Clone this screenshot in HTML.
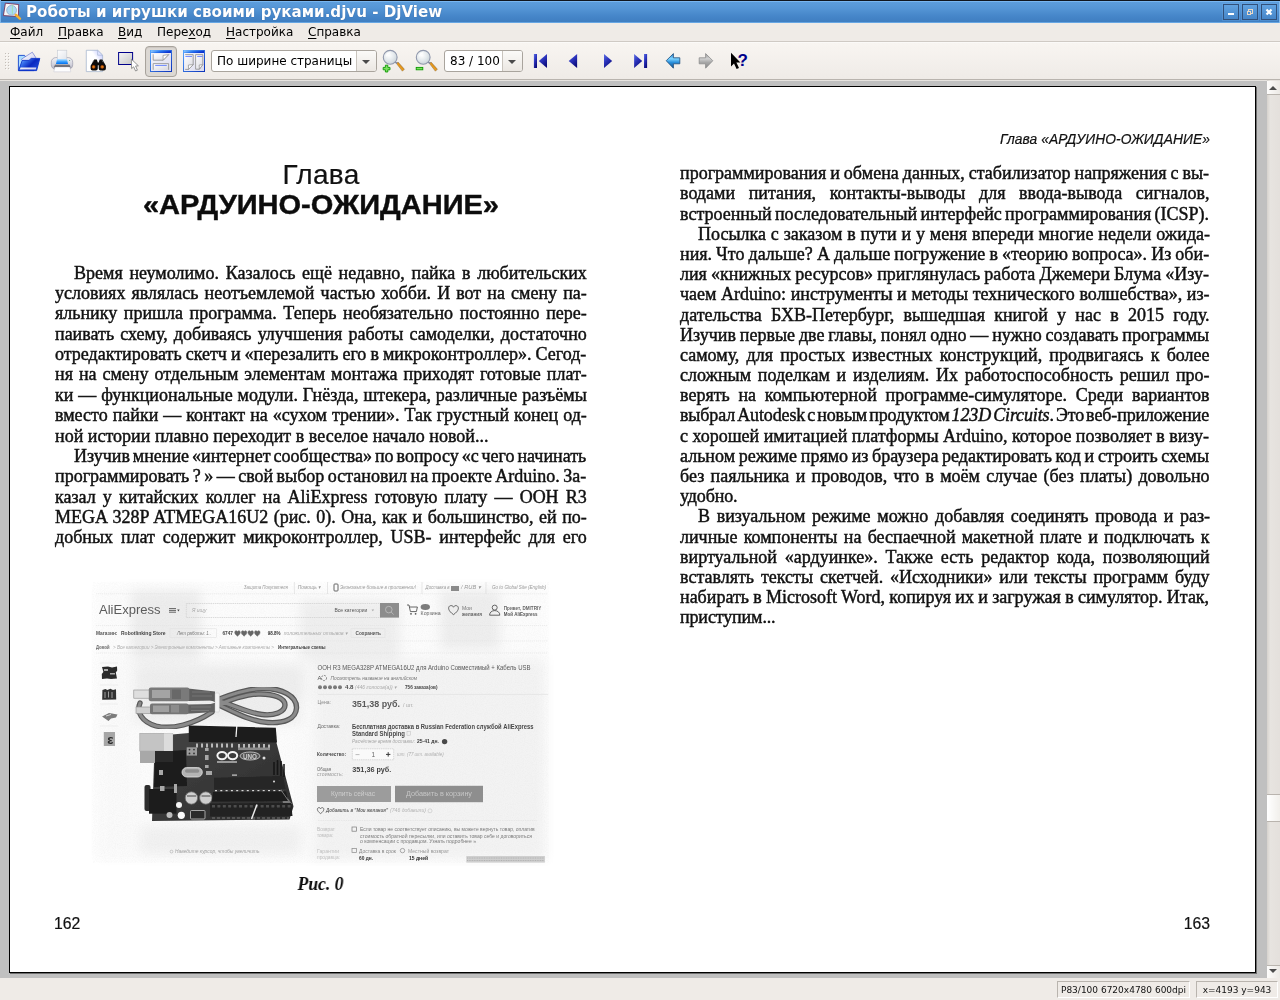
<!DOCTYPE html>
<html lang="ru">
<head>
<meta charset="utf-8">
<title>Роботы и игрушки своими руками.djvu - DjView</title>
<style>
*{box-sizing:border-box;margin:0;padding:0}
html,body{width:1280px;height:1000px;overflow:hidden;background:#efebe7;font-family:"DejaVu Sans","Liberation Sans",sans-serif;font-size:13px;color:#000}
.abs{position:absolute}
#title,#menubar span,.combo span,.sbox,.ln,.bt{will-change:transform}
#titlebar{position:absolute;left:0;top:0;width:1280px;height:23px;background:linear-gradient(#10161e 0,#10161e 1px,#78b6f0 1px,#78b6f0 2px,#5c9ddc 2px,#5596d6 8px,#4686c9 16px,#3f7ec1 22px,#66a6e3 22px,#66a6e3 23px);border-left:1px solid #7ab3ea}
#title{position:absolute;left:26px;top:2px;height:22px;line-height:21px;font-weight:bold;font-size:15.1px;color:#fff;white-space:nowrap;text-shadow:0 0 1px rgba(30,60,110,.6)}
.wbtn{position:absolute;top:4px;width:16px;height:16px;border:1px solid #31507a;background:linear-gradient(#62a3e1,#4585c8);box-shadow:0 0 0 1px rgba(120,180,240,.25)}
#menubar{position:absolute;left:0;top:23px;width:1280px;height:18px;background:#efebe7}
#menubar span{position:absolute;top:0;line-height:18px;font-size:12px;white-space:nowrap}
#menubar u{text-decoration:underline;text-underline-offset:2px}
#tsep{position:absolute;left:0;top:41px;width:1280px;height:1px;background:#cfcac4}
#toolbar{position:absolute;left:0;top:42px;width:1280px;height:38px;background:linear-gradient(#f8f5f1,#efebe7);border-top:1px solid #fbfaf8;border-bottom:1px solid #b9b4ae}
.combo{position:absolute;top:50px;height:22px;border:1px solid #a9a49d;border-radius:3px;background:#fff;font-size:12px;line-height:20px;white-space:nowrap}
.combo .arrow{position:absolute;right:0;top:0;width:20px;height:20px;border-left:1px solid #c9c4bd;background:linear-gradient(#fbfaf8,#ebe7e2);border-radius:0 2px 2px 0}
.combo .arrow:after{content:"";position:absolute;left:5px;top:9px;border:4px solid transparent;border-top:4px solid #4a4a4a;border-bottom:none}
#viewport{position:absolute;left:0;top:80px;width:1267px;height:898px;background:#c0c0c0}
#page{position:absolute;left:9px;top:86px;width:1247px;height:887px;background:#fff;border:1px solid #000;box-shadow:1px 1px 0 #6e6e6e}
#vscroll{position:absolute;left:1267px;top:80px;width:13px;height:898px;background:linear-gradient(90deg,#d6d2cd 0,#e7e4e0 25%,#e4e0dc 100%)}
#status{position:absolute;left:0;top:978px;width:1280px;height:22px;background:#efebe7}
.sbox{position:absolute;top:981px;height:17px;border:1px solid #b9b4ae;border-bottom-color:#fff;border-right-color:#fff;font-size:9px;line-height:15px;padding-top:1px;white-space:nowrap;text-align:center;color:#111}
.ln{position:absolute;white-space:pre;font-family:"Liberation Serif",serif;font-size:18px;line-height:20px;height:20px;color:#111;text-align:justify;text-align-last:justify;-webkit-text-stroke:0.45px #111}
.ln.nj{text-align:left;text-align-last:left}
</style>
</head>
<body>
<div id="titlebar"></div>
<div class="abs" style="left:1279px;top:1px;width:1px;height:22px;background:#86bdf0"></div>
<div id="title">Роботы и игрушки своими руками.djvu - DjView</div>
<!--ICON_APP-->
<div class="wbtn" style="left:1223px"><div class="abs" style="left:4px;top:7.600px;width:6px;height:2.800px;background:#fff"></div></div>
<div class="wbtn" style="left:1242px"><svg class="abs" style="left:0;top:0" width="14" height="14" viewBox="0 0 14 14"><rect x="5.500" y="4.500" width="4" height="4" fill="none" stroke="#ead9c5" stroke-width="1"/><rect x="4.500" y="6.500" width="3" height="3" fill="#4b8bce" stroke="#ead9c5" stroke-width="1"/></svg></div>
<div class="wbtn" style="left:1261px"><svg class="abs" style="left:0;top:0" width="14" height="14" viewBox="0 0 14 14"><path d="M4.5 4.5L9.5 9.5M9.5 4.5L4.5 9.5" stroke="#fff" stroke-width="2.2"/></svg></div>

<div id="menubar">
<span style="left:10px"><u>Ф</u>айл</span>
<span style="left:58px"><u>П</u>равка</span>
<span style="left:118px"><u>В</u>ид</span>
<span style="left:157px">Пере<u>х</u>од</span>
<span style="left:226px"><u>Н</u>астройка</span>
<span style="left:308px"><u>С</u>правка</span>
</div>
<div id="tsep"></div>
<div id="toolbar"></div>
<!--TOOLBAR_ICONS-->
<div class="combo" style="left:211px;width:166px"><span style="position:absolute;left:5px;top:0">По ширине страницы</span><div class="arrow"></div></div>
<div class="combo" style="left:444px;width:79px"><span style="position:absolute;left:5px;top:0">83 / 100</span><div class="arrow"></div></div>

<div id="viewport"></div>
<div class="abs" style="left:0;top:80px;width:1280px;height:1px;background:#e6e3df"></div>
<div id="page"></div>
<div id="vscroll">
<div class="abs" style="left:0;top:1px;width:13px;height:14px;background:linear-gradient(90deg,#fdfcfb,#ece9e5);border-bottom:1px solid #bab5af"></div>
<div class="abs" style="left:2px;top:6px;border:4px solid transparent;border-bottom:4px solid #4c4c4c;border-top:none"></div>
<div class="abs" style="left:0;top:714px;width:13px;height:28px;background:linear-gradient(90deg,#ffffff,#f1efeb);border-top:1px solid #b9b4ae;border-bottom:1px solid #b9b4ae"></div>
<div class="abs" style="left:0;top:885px;width:13px;height:13px;background:linear-gradient(90deg,#fdfcfb,#ece9e5);border-top:1px solid #bab5af"></div>
<div class="abs" style="left:2px;top:889px;border:4px solid transparent;border-top:4px solid #4c4c4c;border-bottom:none"></div>
</div>
<div id="status"></div>
<div class="sbox" style="left:1057px;width:133px">P83/100 6720x4780 600dpi</div>
<div class="sbox" style="left:1196px;width:82px">x=4193 y=943</div>

<div class="ln" style="left:74.0px;top:262px;width:512.8px;transform:translateY(0.55px);">Время неумолимо. Казалось ещё недавно, пайка в любительских</div>
<div class="ln" style="left:55.0px;top:282px;width:531.8px;transform:translateY(0.92px);">условиях являлась неотъемлемой частью хобби. И вот на смену па-</div>
<div class="ln" style="left:55.0px;top:303px;width:531.8px;transform:translateY(0.29px);">яльнику пришла программа. Теперь необязательно постоянно пере-</div>
<div class="ln" style="left:55.0px;top:323px;width:531.8px;transform:translateY(0.66px);">паивать схему, добиваясь улучшения работы самоделки, достаточно</div>
<div class="ln" style="left:55.0px;top:344px;width:531.8px;transform:translateY(0.03px);word-spacing:-0.45px;text-align-last:left;">отредактировать скетч и «перезалить его в микроконтроллер». Сегод-</div>
<div class="ln" style="left:55.0px;top:364px;width:531.8px;transform:translateY(0.40px);">ня на смену отдельным элементам монтажа приходят готовые плат-</div>
<div class="ln" style="left:55.0px;top:384px;width:531.8px;transform:translateY(0.77px);">ки — функциональные модули. Гнёзда, штекера, различные разъёмы</div>
<div class="ln" style="left:55.0px;top:405px;width:531.8px;transform:translateY(0.14px);">вместо пайки — контакт на «сухом трении». Так грустный конец од-</div>
<div class="ln" style="left:55.0px;top:425px;width:433.5px;transform:translateY(0.51px);">ной истории плавно переходит в веселое начало новой...</div>
<div class="ln" style="left:74.0px;top:445px;width:512.8px;transform:translateY(0.88px);word-spacing:-1.59px;text-align-last:left;">Изучив мнение «интернет сообщества» по вопросу «с чего начинать</div>
<div class="ln" style="left:55.0px;top:466px;width:531.8px;transform:translateY(0.25px);word-spacing:-1.03px;text-align-last:left;">программировать ? » — свой выбор остановил на проекте Arduino. За-</div>
<div class="ln" style="left:55.0px;top:486px;width:531.8px;transform:translateY(0.62px);">казал у китайских коллег на AliExpress готовую плату — OOH R3</div>
<div class="ln" style="left:55.0px;top:506px;width:531.8px;transform:translateY(0.99px);">MEGA 328P ATMEGA16U2 (рис. 0). Она, как и большинство, ей по-</div>
<div class="ln" style="left:55.0px;top:527px;width:531.8px;transform:translateY(0.36px);">добных плат содержит микроконтроллер, USB- интерфейс для его</div>
<div class="ln" style="left:680.0px;top:163px;width:529.6px;transform:translateY(0.20px);word-spacing:-0.51px;text-align-last:left;">программирования и обмена данных, стабилизатор напряжения с вы-</div>
<div class="ln" style="left:680.0px;top:183px;width:529.6px;transform:translateY(0.39px);">водами питания, контакты-выводы для ввода-вывода сигналов,</div>
<div class="ln" style="left:680.0px;top:203px;width:529.6px;transform:translateY(0.58px);word-spacing:-1.21px;text-align-last:left;">встроенный последовательный интерфейс программирования (ICSP).</div>
<div class="ln" style="left:697.5px;top:223px;width:512.1px;transform:translateY(0.77px);">Посылка с заказом в пути и у меня впереди многие недели ожида-</div>
<div class="ln" style="left:680.0px;top:243px;width:529.6px;transform:translateY(0.96px);word-spacing:-0.44px;text-align-last:left;">ния. Что дальше? А дальше погружение в «теорию вопроса». Из оби-</div>
<div class="ln" style="left:680.0px;top:264px;width:529.6px;transform:translateY(0.15px);word-spacing:-0.35px;text-align-last:left;">лия «книжных ресурсов» приглянулась работа Джемери Блума «Изу-</div>
<div class="ln" style="left:680.0px;top:284px;width:529.6px;transform:translateY(0.34px);">чаем Arduino: инструменты и методы технического волшебства», из-</div>
<div class="ln" style="left:680.0px;top:304px;width:529.6px;transform:translateY(0.53px);">дательства БХВ-Петербург, вышедшая книгой у нас в 2015 году.</div>
<div class="ln" style="left:680.0px;top:324px;width:529.6px;transform:translateY(0.72px);word-spacing:-0.61px;text-align-last:left;">Изучив первые две главы, понял одно — нужно создавать программы</div>
<div class="ln" style="left:680.0px;top:344px;width:529.6px;transform:translateY(0.91px);">самому, для простых известных конструкций, продвигаясь к более</div>
<div class="ln" style="left:680.0px;top:365px;width:529.6px;transform:translateY(0.10px);">сложным поделкам и изделиям. Их работоспособность решил про-</div>
<div class="ln" style="left:680.0px;top:385px;width:529.6px;transform:translateY(0.29px);">верять на компьютерной программе-симуляторе. Среди вариантов</div>
<div class="ln" style="left:680.0px;top:405px;width:529.6px;transform:translateY(0.48px);word-spacing:-2.30px;letter-spacing:-0.128px;text-align-last:left;">выбрал Autodesk с новым продуктом <i>123D Circuits</i>. Это веб-приложение</div>
<div class="ln" style="left:680.0px;top:425px;width:529.6px;transform:translateY(0.67px);word-spacing:-0.06px;text-align-last:left;">с хорошей имитацией платформы Arduino, которое позволяет в визу-</div>
<div class="ln" style="left:680.0px;top:445px;width:529.6px;transform:translateY(0.86px);word-spacing:-0.85px;text-align-last:left;">альном режиме прямо из браузера редактировать код и строить схемы</div>
<div class="ln" style="left:680.0px;top:466px;width:529.6px;transform:translateY(0.05px);">без паяльника и проводов, что в моём случае (без платы) довольно</div>
<div class="ln" style="left:680.0px;top:486px;width:58.0px;transform:translateY(0.24px);word-spacing:0.00px;letter-spacing:-0.118px;text-align-last:left;">удобно.</div>
<div class="ln" style="left:697.5px;top:506px;width:512.1px;transform:translateY(0.43px);">В визуальном режиме можно добавляя соединять провода и раз-</div>
<div class="ln" style="left:680.0px;top:526px;width:529.6px;transform:translateY(0.62px);">личные компоненты на беспаечной макетной плате и подключать к</div>
<div class="ln" style="left:680.0px;top:546px;width:529.6px;transform:translateY(0.81px);">виртуальной «ардуинке». Также есть редактор кода, позволяющий</div>
<div class="ln" style="left:680.0px;top:567px;width:529.6px;transform:translateY(0.00px);">вставлять тексты скетчей. «Исходники» или тексты программ буду</div>
<div class="ln" style="left:680.0px;top:587px;width:529.6px;transform:translateY(0.19px);word-spacing:-0.22px;text-align-last:left;">набирать в Microsoft Word, копируя их и загружая в симулятор. Итак,</div>
<div class="ln" style="left:680.0px;top:607px;width:96.0px;transform:translateY(0.38px);word-spacing:0.00px;letter-spacing:-0.129px;text-align-last:left;">приступим...</div>
<div class="abs bt" id="h1a" style="left:54px;top:158px;width:534px;text-align:center;font-family:'Liberation Sans',sans-serif;font-size:28px;line-height:34px;letter-spacing:0.3px;color:#111;white-space:nowrap;-webkit-text-stroke:0.2px #111">Глава</div>
<div class="abs bt" id="h1b" style="left:54px;top:188px;width:534px;text-align:center;font-family:'Liberation Sans',sans-serif;font-weight:bold;font-size:27px;line-height:34px;color:#0c0c0c;white-space:nowrap;transform:scaleX(1.075);-webkit-text-stroke:0.4px #0c0c0c">«АРДУИНО-ОЖИДАНИЕ»</div>
<div class="abs bt" id="hdr" style="left:900px;top:132px;width:310px;text-align:right;font-family:'Liberation Sans',sans-serif;font-style:italic;font-size:13.8px;line-height:16px;letter-spacing:0.09px;color:#111;white-space:nowrap;-webkit-text-stroke:0.2px #111">Глава «АРДУИНО-ОЖИДАНИЕ»</div>
<div class="abs bt" id="pn1" style="left:54px;top:914px;font-family:'Liberation Sans',sans-serif;font-size:15.8px;line-height:20px;color:#111;-webkit-text-stroke:0.2px #111">162</div>
<div class="abs bt" id="pn2" style="left:1110px;top:914px;width:100px;text-align:right;font-family:'Liberation Sans',sans-serif;font-size:15.8px;line-height:20px;color:#111;-webkit-text-stroke:0.2px #111">163</div>
<div class="abs bt" id="cap" style="left:220px;top:872px;width:201px;text-align:center;font-family:'Liberation Serif',serif;font-style:italic;font-weight:bold;font-size:19.5px;line-height:24px;color:#0c0c0c;transform:scaleX(0.9)">Рис. 0</div>

<!-- app icon -->
<svg class="abs" style="left:0;top:0" width="24" height="23" viewBox="0 0 24 23">
<path d="M5.4 3.2L18.7 4.5L18.4 16.6L3.4 15.6Z" fill="#f6f6f6" stroke="#7a3458" stroke-width="0.9"/>
<circle cx="11.6" cy="10.3" r="4.9" fill="#aad9f3" stroke="#8fa6cc" stroke-width="0.8"/>
<path d="M12.4 4.6V13.8" stroke="#9de0a8" stroke-width="0.9"/>
<path d="M15.8 14.8L19.9 18.6" stroke="#f3b033" stroke-width="2.6" stroke-linecap="round"/>
</svg>
<!-- toolbar handle -->
<svg class="abs" style="left:4px;top:52px" width="7" height="19" viewBox="0 0 7 19">
<g fill="#c3beb8"><rect x="1" y="1" width="1" height="1"/><rect x="4" y="1" width="1" height="1"/><rect x="1" y="4" width="1" height="1"/><rect x="4" y="4" width="1" height="1"/><rect x="1" y="7" width="1" height="1"/><rect x="4" y="7" width="1" height="1"/><rect x="1" y="10" width="1" height="1"/><rect x="4" y="10" width="1" height="1"/><rect x="1" y="13" width="1" height="1"/><rect x="4" y="13" width="1" height="1"/><rect x="1" y="16" width="1" height="1"/><rect x="4" y="16" width="1" height="1"/></g>
<g fill="#fbfaf8"><rect x="2" y="2" width="1" height="1"/><rect x="5" y="2" width="1" height="1"/><rect x="2" y="5" width="1" height="1"/><rect x="5" y="5" width="1" height="1"/><rect x="2" y="8" width="1" height="1"/><rect x="5" y="8" width="1" height="1"/><rect x="2" y="11" width="1" height="1"/><rect x="5" y="11" width="1" height="1"/><rect x="2" y="14" width="1" height="1"/><rect x="5" y="14" width="1" height="1"/><rect x="2" y="17" width="1" height="1"/><rect x="5" y="17" width="1" height="1"/></g>
</svg>
<!-- open folder -->
<svg class="abs" style="left:16px;top:50px" width="26" height="23" viewBox="16 50 26 23">
<defs>
<linearGradient id="fo1" x1="0" y1="0" x2="1" y2="1"><stop offset="0" stop-color="#9fd8ff"/><stop offset="1" stop-color="#e8f6ff"/></linearGradient>
<linearGradient id="fo2" x1="0" y1="0" x2="1" y2="0.6"><stop offset="0" stop-color="#e8f0ff"/><stop offset="0.3" stop-color="#3c78f0"/><stop offset="0.65" stop-color="#0a28c0"/><stop offset="1" stop-color="#1c46d6"/></linearGradient>
<linearGradient id="fo3" x1="0" y1="0" x2="1" y2="1"><stop offset="0" stop-color="#ffffff"/><stop offset="1" stop-color="#c4c4ea"/></linearGradient>
</defs>
<path d="M18.4 55.4H24.6L25.6 57H34V70.6H18.4Z" fill="url(#fo1)" stroke="#1243cc" stroke-width="0.9"/>
<path d="M21.4 59.2L32.3 52.2L36 57.8L27 66Z" fill="url(#fo3)" stroke="#5566cc" stroke-width="0.6"/>
<path d="M22.2 60.4H29L31.2 58.4H39.8L36.6 70.6H18.6Z" fill="url(#fo2)" stroke="#0a32c8" stroke-width="0.9"/>
<path d="M20.6 67.4H36.4L35.8 69.6H19.6Z" fill="url(#fo3)"/>
</svg>
<!-- printer -->
<svg class="abs" style="left:50px;top:49px" width="24" height="24" viewBox="50 49 24 24">
<defs>
<linearGradient id="pr1" x1="0" y1="0" x2="0" y2="1"><stop offset="0" stop-color="#f2f2f6"/><stop offset="0.6" stop-color="#d2d2dc"/><stop offset="1" stop-color="#a8a8b8"/></linearGradient>
<linearGradient id="pr2" x1="0" y1="0" x2="0" y2="1"><stop offset="0" stop-color="#bfe4ff"/><stop offset="0.5" stop-color="#3fa4ff"/><stop offset="1" stop-color="#0070ee"/></linearGradient>
<linearGradient id="pr3" x1="0" y1="0" x2="1" y2="1"><stop offset="0" stop-color="#ffffff"/><stop offset="1" stop-color="#dfe3ea"/></linearGradient>
<linearGradient id="pr4" x1="0" y1="0" x2="0" y2="1"><stop offset="0" stop-color="#8a8a94"/><stop offset="1" stop-color="#3c3c44"/></linearGradient>
</defs>
<rect x="51.3" y="57.6" width="21.4" height="11.8" rx="4.5" fill="url(#pr1)" stroke="#9c9cac" stroke-width="0.7"/>
<rect x="57.3" y="50.2" width="9.5" height="10" fill="url(#pr3)" stroke="#c4c8d0" stroke-width="0.6"/>
<path d="M57 59H67L68 64H56Z" fill="url(#pr2)"/>
<path d="M55 64.6H69.5L70.5 67.4H54Z" fill="url(#pr4)"/>
<path d="M55 67H69.8L70.8 71.8H53.8Z" fill="#fdfdfe" stroke="#c6c6d0" stroke-width="0.5"/>
<circle cx="69.6" cy="60.5" r="0.6" fill="#40b070"/>
</svg>
<!-- find -->
<svg class="abs" style="left:85px;top:49px" width="23" height="24" viewBox="85 49 23 24">
<defs>
<linearGradient id="fi1" x1="1" y1="0" x2="0.3" y2="0.6"><stop offset="0" stop-color="#b4bcff"/><stop offset="0.6" stop-color="#ffffff"/></linearGradient>
<radialGradient id="fi2"><stop offset="0" stop-color="#ff9a20"/><stop offset="0.6" stop-color="#b05008"/><stop offset="1" stop-color="#301000"/></radialGradient>
</defs>
<path d="M86.3 50.3H97.6L102.6 55.2V71.6H86.3Z" fill="url(#fi1)" stroke="#9fb0cc" stroke-width="0.7"/>
<path d="M97.6 50.3V55.2H102.6Z" fill="#dfe3ff" stroke="#9fb0cc" stroke-width="0.6"/>
<path d="M94.2 59.4h2.6l1 3h.9l1-3h2.6l3.6 6.4v2.6a2 2 0 0 1-2 2h-3.2a2 2 0 0 1-2-2v-3.2h-.9v3.2a2 2 0 0 1-2 2h-3.2a2 2 0 0 1-2-2v-2.6Z" fill="#0c0c0c"/>
<ellipse cx="93.6" cy="66.9" rx="2.2" ry="2.1" fill="url(#fi2)"/>
<ellipse cx="102.2" cy="66.9" rx="2.2" ry="2.1" fill="url(#fi2)"/>
<path d="M92.6 62.4l1.2-2M103.2 62.4l-1.2-2" stroke="#777" stroke-width="0.7"/>
</svg>
<!-- select -->
<svg class="abs" style="left:117px;top:51px" width="23" height="22" viewBox="117 51 23 22">
<defs><linearGradient id="se1" x1="0" y1="0" x2="1" y2="1"><stop offset="0" stop-color="#f6f6f6"/><stop offset="1" stop-color="#c6c6c6"/></linearGradient></defs>
<rect x="118.6" y="52.5" width="14" height="12" fill="url(#se1)" stroke="#00008b" stroke-width="1"/>
<path d="M131.4 59.2L131.6 68.6L133.6 66.8L135.6 71L137.4 70.2L135.6 66L138.4 65.8Z" fill="#fff" stroke="#7c7c7c" stroke-width="0.8"/>
</svg>
<!-- pressed btn -->
<div class="abs" style="left:145px;top:46px;width:32px;height:31px;border:1px solid #a8a39c;border-radius:4px;background:#dcd8d3;box-shadow:inset 0 1px 1px #cbc7c1"></div>
<!-- continuous -->
<svg class="abs" style="left:150px;top:50px" width="22" height="22" viewBox="0 0 22 22">
<defs>
<linearGradient id="wf" x1="0" y1="0" x2="1" y2="1"><stop offset="0" stop-color="#58a8ff"/><stop offset="1" stop-color="#0a30b8"/></linearGradient>
<linearGradient id="wt" x1="0" y1="0" x2="1" y2="0.4"><stop offset="0" stop-color="#a8dcff"/><stop offset="0.5" stop-color="#2a78f0"/><stop offset="1" stop-color="#0a32d0"/></linearGradient>
<linearGradient id="wi" x1="0" y1="0" x2="1" y2="1"><stop offset="0" stop-color="#f4f4fa"/><stop offset="1" stop-color="#dcdcee"/></linearGradient>
<linearGradient id="pg" x1="0" y1="0" x2="1" y2="1"><stop offset="0" stop-color="#ffffff"/><stop offset="1" stop-color="#d8d8e0"/></linearGradient>
</defs>
<rect x="0" y="0" width="22" height="22" fill="url(#wf)"/>
<rect x="1" y="0.6" width="20" height="2.4" fill="url(#wt)"/>
<rect x="1" y="3" width="20" height="18" fill="url(#wi)"/>
<path d="M3.2 4.3V10.2H13.2L18.8 4.5" fill="url(#pg)" stroke="#8c8c8c" stroke-width="0.8"/>
<path d="M18.6 4.6L13.2 10.2L13 5.4Z" fill="#fff" stroke="#8c8c8c" stroke-width="0.7"/>
<path d="M3.2 19.8V13.6H18.6V19.8" fill="url(#pg)" stroke="#8c8c8c" stroke-width="0.8"/>
<path d="M5.2 15.4H16.8" stroke="#6a86ff" stroke-width="1"/>
</svg>
<!-- side by side -->
<svg class="abs" style="left:183px;top:50px" width="22" height="22" viewBox="0 0 22 22">
<rect x="0" y="0" width="22" height="22" fill="url(#wf)"/>
<rect x="1" y="0.6" width="20" height="2.4" fill="url(#wt)"/>
<rect x="1" y="3" width="20" height="18" fill="url(#wi)"/>
<path d="M2.2 4.6H10.2V14.6L5.6 19.4H2.2" fill="url(#pg)" stroke="#8c8c8c" stroke-width="0.8"/>
<path d="M10.2 14.6L5.6 19.4L5.4 15Z" fill="#fff" stroke="#8c8c8c" stroke-width="0.7"/>
<path d="M2.4 6.4H9" stroke="#6a86ff" stroke-width="1"/>
<path d="M12.6 4.6H19.8V14.6L16.4 19.2H12.6Z" fill="url(#pg)" stroke="#8c8c8c" stroke-width="0.8"/>
<path d="M19.8 14.6L16.4 19.2L16.2 15Z" fill="#fff" stroke="#8c8c8c" stroke-width="0.7"/>
<path d="M14.2 6.4H19.6" stroke="#6a86ff" stroke-width="1"/>
</svg>
<!-- zoom in / zoom out -->
<svg class="abs" style="left:380px;top:48px" width="60" height="26" viewBox="380 48 60 26">
<defs>
<radialGradient id="zl" cx="0.4" cy="0.35" r="0.7"><stop offset="0" stop-color="#ffffff"/><stop offset="0.5" stop-color="#e6ebee"/><stop offset="1" stop-color="#c8d2d8"/></radialGradient>
<linearGradient id="zh" x1="0" y1="1" x2="1" y2="0"><stop offset="0" stop-color="#ffd060"/><stop offset="0.5" stop-color="#e89818"/><stop offset="1" stop-color="#a86008"/></linearGradient>
</defs>
<g id="mag">
<path d="M396.4 63.4L398 62L404.4 69.2L402.4 71.2Z" fill="url(#zh)" stroke="#8a6a40" stroke-width="0.5"/>
<path d="M394.6 61.8L397.2 63.4" stroke="#8088a0" stroke-width="1.6"/>
<circle cx="390.2" cy="57.3" r="6.9" fill="url(#zl)" stroke="#9098ac" stroke-width="1.1"/>
<path d="M386.6 56.4A4 4 0 0 1 390.2 52.8" fill="none" stroke="#fff" stroke-width="1.2" opacity="0.9"/>
</g>
<use href="#mag" x="33"/>
<path d="M385.4 65.2h2.4v2.2h2.2v2.4h-2.2v2.2h-2.4v-2.2h-2.2v-2.4h2.2Z" fill="#7ee060" stroke="#0c9a00" stroke-width="0.9"/>
<rect x="416.2" y="67.4" width="6.6" height="2.4" fill="#7ee060" stroke="#0c9a00" stroke-width="0.9"/>
</svg>
<!-- nav arrows -->
<svg class="abs" style="left:530px;top:52px" width="120" height="18" viewBox="530 52 120 18">
<defs><linearGradient id="nv" x1="0" y1="0" x2="0.6" y2="1"><stop offset="0" stop-color="#5c6ee4"/><stop offset="0.5" stop-color="#2c34bc"/><stop offset="1" stop-color="#0c0c7c"/></linearGradient></defs>
<rect x="533.9" y="54" width="3.1" height="14" fill="url(#nv)"/>
<path d="M538.8 61L547 54V68Z" fill="url(#nv)"/>
<path d="M568.7 61L577.1 54V68Z" fill="url(#nv)"/>
<path d="M612.2 61L604 54V68Z" fill="url(#nv)"/>
<path d="M642.2 61L634.1 54V68Z" fill="url(#nv)"/>
<rect x="644" y="54" width="3.1" height="14" fill="url(#nv)"/>
</svg>
<!-- back / forward -->
<svg class="abs" style="left:662px;top:51px" width="56" height="20" viewBox="662 51 56 20">
<defs>
<linearGradient id="bk" x1="0" y1="0" x2="0" y2="1"><stop offset="0" stop-color="#2a7cc8"/><stop offset="0.35" stop-color="#7fd4ff"/><stop offset="0.6" stop-color="#2a90dc"/><stop offset="1" stop-color="#14508c"/></linearGradient>
<linearGradient id="fw" x1="0" y1="0" x2="0" y2="1"><stop offset="0" stop-color="#9a9a9a"/><stop offset="0.35" stop-color="#d0d0d0"/><stop offset="0.6" stop-color="#a8a8a8"/><stop offset="1" stop-color="#8a8a8a"/></linearGradient>
</defs>
<path d="M666.2 60.7L673.4 53.6V57.8H679.8V63.8H673.4V68.2Z" fill="url(#bk)" stroke="#1c4c7c" stroke-width="0.8" stroke-linejoin="round"/>
<path d="M712.8 60.7L705.6 53.6V57.8H699.2V63.8H705.6V68.2Z" fill="url(#fw)" stroke="#8c8c8c" stroke-width="0.8" stroke-linejoin="round"/>
</svg>
<!-- whats this -->
<svg class="abs" style="left:728px;top:50px" width="24" height="22" viewBox="728 50 24 22">
<path d="M731 52.8V66.4L734 63.6L736.6 69L739 68L736.4 62.6L740.4 62.4Z" fill="#000"/>
<text x="737.6" y="65.8" font-family="Liberation Sans, sans-serif" font-weight="bold" font-size="17" fill="#00008b">?</text>
</svg>

<svg class="abs" id="fig" style="left:90px;top:578px" width="464" height="288" viewBox="90 578 464 288" font-family="Liberation Sans, sans-serif">
<defs>
<filter id="bl" x="-2%" y="-2%" width="104%" height="104%"><feGaussianBlur stdDeviation="0.55"/></filter>
<filter id="bl4" x="-3%" y="-3%" width="106%" height="106%"><feGaussianBlur stdDeviation="0.7"/></filter>
<filter id="bl2" x="-5%" y="-5%" width="110%" height="110%"><feGaussianBlur stdDeviation="0.8"/></filter>
<filter id="bl3" x="-10%" y="-10%" width="120%" height="120%"><feGaussianBlur stdDeviation="6"/></filter>
<filter id="noise" x="0" y="0" width="100%" height="100%">
<feTurbulence type="fractalNoise" baseFrequency="0.9" numOctaves="2" seed="7" result="n"/>
<feColorMatrix in="n" type="matrix" values="0 0 0 0 0.55  0 0 0 0 0.55  0 0 0 0 0.55  0.9 0.9 0 0 -0.72"/>
</filter>
<linearGradient id="brd" x1="0" y1="0" x2="1" y2="1"><stop offset="0" stop-color="#444444"/><stop offset="1" stop-color="#2c2c2c"/></linearGradient>
</defs>
<!-- background -->
<g filter="url(#bl3)">
<rect x="96" y="586" width="450" height="274" fill="#fcfcfc"/>
<rect x="131" y="590" width="70" height="70" fill="#ededed"/>
<rect x="300" y="600" width="100" height="60" fill="#efefef"/>
<rect x="440" y="590" width="60" height="60" fill="#eeeeee"/>
<rect x="312" y="660" width="234" height="200" fill="#f3f3f3"/>
<rect x="99" y="662" width="36" height="196" fill="#fafafa"/>
<rect x="135" y="664" width="170" height="60" fill="#eeeeee"/>
<rect x="300" y="700" width="16" height="150" fill="#fafafa"/>
<rect x="140" y="825" width="160" height="30" fill="#f1f1f1"/>
</g>
<rect x="92" y="582" width="457" height="281" filter="url(#noise)" opacity="0.16"/>

<!-- header part of screenshot -->
<g filter="url(#bl)">
<g stroke="#e0e0e0" stroke-width="0.6" stroke-dasharray="1.2 0.8">
<path d="M96 593.8H548"/><path d="M96 625.6H548"/><path d="M96 653H548"/><path d="M300 641H548" stroke="#e2e2e2"/>
</g>
<g stroke="#d8d8d8" stroke-width="0.6"><path d="M294.4 582V594"/><path d="M327.5 582V594"/><path d="M422 582V594"/><path d="M486 582V594"/></g>
<g font-size="5.3" fill="#9a9a9a" font-style="italic">
<text x="243.8" y="589.2" lengthAdjust="spacingAndGlyphs" textLength="44">Защита Покупателя</text>
<text x="297.8" y="589.2" lengthAdjust="spacingAndGlyphs" textLength="23">Помощь ▾</text>
<text x="340" y="589.2" lengthAdjust="spacingAndGlyphs" textLength="76">Экономьте больше в приложении!</text>
<text x="425.6" y="589.2" lengthAdjust="spacingAndGlyphs" textLength="24">Доставка в</text>
<text x="461" y="589.2" lengthAdjust="spacingAndGlyphs" textLength="20">/ RUB ▾</text>
<text x="492" y="589.2" lengthAdjust="spacingAndGlyphs" textLength="54">Go to Global Site (English)</text>
</g>
<rect x="334" y="584" width="4" height="7" rx="0.8" fill="none" stroke="#555" stroke-width="0.9"/>
<rect x="451" y="586" width="8" height="5" fill="#8a8a8a"/>
<!-- logo -->
<text x="99" y="614.2" font-size="13.2" fill="#5c5c5c" lengthAdjust="spacingAndGlyphs" textLength="61.5" lengthAdjust="spacingAndGlyphs">AliExpress</text>
<g stroke="#555" stroke-width="0.9"><path d="M169 608.6H176"/><path d="M169 610.4H176"/><path d="M169 612.2H176"/></g>
<path d="M177.2 609.6h2.4l-1.2 1.8z" fill="#444"/>
<rect x="186.3" y="603.5" width="194" height="14" fill="none" stroke="#cfcfcf" stroke-width="0.7" stroke-dasharray="1.5 0.7"/>
<text x="192" y="612.4" font-size="5" fill="#a8a8a8" font-style="italic">Я ищу</text>
<text x="334.4" y="612.4" font-size="5.6" fill="#555" lengthAdjust="spacingAndGlyphs" textLength="33">Все категории</text>
<path d="M371.5 609.6h2.6l-1.3 1.6z" fill="#aaa"/>
<rect x="380" y="603" width="19" height="14.6" fill="#8c8c8c"/>
<circle cx="388.8" cy="609.6" r="3.3" fill="none" stroke="#b9b9b9" stroke-width="0.9"/><path d="M391.2 612L393.6 614.6" stroke="#b9b9b9" stroke-width="0.9"/>
<!-- cart -->
<path d="M407 605h2l1.4 6.6h6l1-4.6h-8" fill="none" stroke="#555" stroke-width="0.9"/><circle cx="411" cy="613.8" r="0.9" fill="#555"/><circle cx="415.6" cy="613.8" r="0.9" fill="#555"/>
<ellipse cx="425.3" cy="607" rx="4.7" ry="3" fill="#7c7c7c"/>
<text x="420.6" y="615.4" font-size="5" fill="#666" lengthAdjust="spacingAndGlyphs" textLength="20">Корзина</text>
<path d="M453.5 614.6c-7-4.8-5.2-9 -2.4-9c1.2 0 2 .7 2.4 1.6c.4-.9 1.2-1.6 2.4-1.6c2.8 0 4.600 4.200-2.400 9z" fill="none" stroke="#555" stroke-width="0.9"/>
<text x="461.9" y="609.6" font-size="5" fill="#777" lengthAdjust="spacingAndGlyphs" textLength="10">Мои</text>
<text x="461.9" y="615.8" font-size="5" fill="#666" font-weight="bold" lengthAdjust="spacingAndGlyphs" textLength="20">желания</text>
<circle cx="494.7" cy="607.6" r="2.5" fill="none" stroke="#555" stroke-width="0.9"/><path d="M489.6 615.2c0-3 2.400-4.600 5.100-4.600s5.100 1.600 5.100 4.600z" fill="none" stroke="#555" stroke-width="0.9"/>
<text x="503.8" y="609.6" font-size="5" fill="#666" font-weight="bold" lengthAdjust="spacingAndGlyphs" textLength="37.500">Привет, DMITRIY</text>
<text x="503.8" y="615.8" font-size="5" fill="#555" font-weight="bold" lengthAdjust="spacingAndGlyphs" textLength="33.700">Мой AliExpress</text>
<!-- store row -->
<text x="96" y="635.2" font-size="5" fill="#555" font-weight="bold" lengthAdjust="spacingAndGlyphs" textLength="21.500">Магазин:</text>
<text x="121" y="635.4" font-size="5.6" fill="#444" font-weight="bold" lengthAdjust="spacingAndGlyphs" textLength="44.600">Robotlinking Store</text>
<rect x="170" y="628.8" width="46.500" height="8.800" fill="none" stroke="#e2e2e2" stroke-width="0.6"/>
<text x="177" y="635.2" font-size="5" fill="#777" font-style="italic" lengthAdjust="spacingAndGlyphs" textLength="34">Лет работы: 1..</text>
<text x="222.5" y="635.2" font-size="5" fill="#444" font-weight="bold" lengthAdjust="spacingAndGlyphs" textLength="10.500">6747</text>
<g fill="#666" stroke="#666" stroke-width="0.500"><path id="hrt" d="M237.500 636.200c-4-2.800-2.900-5.400-1.300-5.400c.7 0 1.100.4 1.300.9c.2-.5.600-.9 1.300-.9c1.600 0 2.700 2.600-1.300 5.400z"/><use href="#hrt" x="6.600"/><use href="#hrt" x="13.200"/><use href="#hrt" x="19.800"/></g>
<text x="267.8" y="635.2" font-size="5.2" fill="#333" font-weight="bold" lengthAdjust="spacingAndGlyphs" textLength="12.800">98.8%</text>
<text x="283.8" y="635.2" font-size="5" fill="#aaa" font-style="italic" lengthAdjust="spacingAndGlyphs" textLength="64">положительных отзывов ▾</text>
<rect x="351" y="628.8" width="34" height="8.800" fill="none" stroke="#e0e0e0" stroke-width="0.6"/>
<text x="355.6" y="635.2" font-size="5.2" fill="#555" font-weight="bold" lengthAdjust="spacingAndGlyphs" textLength="25.400">Сохранить</text>
<!-- breadcrumbs -->
<text x="96" y="648.8" font-size="5" fill="#666" font-weight="bold" lengthAdjust="spacingAndGlyphs" textLength="13.500">Домой</text>
<text x="113" y="648.8" font-size="5" fill="#aaa" font-style="italic" lengthAdjust="spacingAndGlyphs" textLength="161">&gt; Все категории &gt; Электронные компоненты &gt; Активные компоненты &gt;</text>
<text x="278" y="648.8" font-size="5" fill="#444" font-weight="bold" lengthAdjust="spacingAndGlyphs" textLength="47.600">Интегральные схемы</text>
</g>

<!-- product image area -->
<g filter="url(#bl)">
<g stroke="#e2e2e2" stroke-width="0.5"><path d="M100 663H118"/><path d="M100 685H118"/><path d="M100 704H118"/><path d="M100 726H118"/></g>
<!-- thumbnails -->
<path d="M102 667l6-.6 4 1 5-.8 .2 4-1.400 2 1.200 6-6 .4-4-.6-5 .6-.200-5 1.600-2z" fill="#2c2c2c"/>
<path d="M104 669h4v2h-4zM110 673h5v1.500h-5z" fill="#aaa"/>
<path d="M102.400 690l3-1 2 1 3-1.200 2.600 1.200 3-.8 .2 10.400-14 .2z" fill="#333"/>
<path d="M105 692v6M108.500 691.500v6M112 692v6" stroke="#bbb" stroke-width="0.8"/>
<path d="M102 716.500l7-3.500 8.500 1.500-1.500 3-5 1-2.500 2.500z" fill="#7c7c7c"/>
<path d="M106 716l5-1.500" stroke="#ddd" stroke-width="0.9"/>
<rect x="103.8" y="732" width="11.200" height="14" fill="#a6a6a6"/>
<text x="107.200" y="743.600" font-size="13" fill="#2a2a2a" font-weight="bold">ε</text>
</g>
<!-- cable -->
<g filter="url(#bl)" fill="none" stroke-linecap="round">
<g stroke="#585858" stroke-width="5.400">
<path d="M186 694C200 692 210 697 217 700C232 694 246 689 262 688.500C282 688 297 696 296.500 708C296 719 284 723.500 268 722.500C250 721 236 713 219 705"/>
<path d="M186 709C198 709 208 708 217 705C230 700 244 694.500 258 694C274 693.500 285 698 285 705C285 712 274 716 262 714.500C248 713 236 706 219 701"/>
<path d="M140 703C136 712 142 722 156 726C172 730 194 724 212 712"/>
</g>
<g stroke="#8a8a8a" stroke-width="3">
<path d="M186 694C200 692 210 697 217 700C232 694 246 689 262 688.500C282 688 297 696 296.500 708C296 719 284 723.500 268 722.500C250 721 236 713 219 705"/>
<path d="M186 709C198 709 208 708 217 705C230 700 244 694.500 258 694C274 693.500 285 698 285 705C285 712 274 716 262 714.500C248 713 236 706 219 701"/>
<path d="M140 703C136 712 142 722 156 726C172 730 194 724 212 712"/>
</g>
</g>
<g filter="url(#bl)">
<path d="M188 688.500L215 691.500V700.500L188 701Z" fill="#5e5e5e"/>
<path d="M187 704.500L215 704V712L187 713.800Z" fill="#626262"/>
<path d="M192 692h18M192 696h20M191 707h20M191 710.500h18" stroke="#7c7c7c" stroke-width="0.900"/>
<rect x="133.800" y="690" width="16" height="8.200" fill="#dedede" stroke="#8a8a8a" stroke-width="0.6"/>
<rect x="148.800" y="687.600" width="40.500" height="13.600" rx="2" fill="#7a7a7a"/>
<rect x="152" y="690" width="18" height="8" fill="#a4a4a4"/>
<rect x="172" y="689.500" width="9" height="9.500" fill="#686868"/>
<rect x="136" y="707" width="15" height="6.400" fill="#cfcfcf" stroke="#8a8a8a" stroke-width="0.6"/>
<rect x="150" y="703.600" width="38.500" height="10.600" rx="2" fill="#747474"/>
<rect x="153" y="705.500" width="16" height="6.500" fill="#a0a0a0"/>
<rect x="171" y="705" width="8" height="7.500" fill="#8c8c8c"/>
<rect x="215" y="693" width="4.400" height="19" rx="1" fill="#f4f4f4" stroke="#bbb" stroke-width="0.4"/>
</g>
<!-- board -->
<g filter="url(#bl4)">
<path d="M172 734.500L189 733L276 741L293.500 806.500L289.500 819.500L152 821L154 762L172 758Z" fill="url(#brd)"/>
<path d="M155 752L186 750L187 786L154 787Z" fill="#1d1d1d"/>
<path d="M281 789L292 804L283 804Z" fill="#7a7a7a"/>
<path d="M188.800 725.500L275.800 727.800L277 742.500L188.800 742Z" fill="#1a1a1a"/>
<path d="M236.800 726L236 737" stroke="#f2f2f2" stroke-width="1.300"/>
<g fill="#b8b8b8"><rect x="196" y="743.500" width="2" height="4"/><rect x="201" y="743.500" width="2" height="4"/><rect x="206" y="743.500" width="2" height="4"/><rect x="211" y="743.500" width="2" height="4"/><rect x="216" y="743.500" width="2" height="4"/><rect x="221" y="743.500" width="2" height="4"/><rect x="226" y="743.500" width="2" height="4"/><rect x="231" y="743.500" width="2" height="4"/><rect x="238" y="744" width="2" height="4"/><rect x="243" y="744" width="2" height="4"/><rect x="248" y="744" width="2" height="4"/><rect x="253" y="744" width="2" height="4"/><rect x="258" y="744" width="2" height="4"/><rect x="263" y="744" width="2" height="4"/><rect x="268" y="744.500" width="2" height="4"/></g>
<rect x="238" y="747.500" width="32" height="2.600" fill="#8a8a8a"/>
<!-- usb socket -->
<rect x="139.800" y="733.300" width="33" height="17.800" fill="#c4c4c4" stroke="#9a9a9a" stroke-width="0.5"/>
<rect x="164" y="733.300" width="8.800" height="17.800" fill="#dcdcdc"/>
<rect x="140" y="751" width="15" height="12" fill="#a8a8a8"/>
<rect x="155" y="751" width="18" height="11" fill="#2a2a2a"/>
<!-- power jack -->
<rect x="144.500" y="785" width="6" height="26" rx="2" fill="#2e2e2e"/>
<rect x="149" y="789" width="27.500" height="24.700" fill="#1e1e1e"/>
<!-- small chip -->
<rect x="186.700" y="747.300" width="10.300" height="8.300" fill="#9c9c9c"/>
<g fill="#333"><circle cx="189.500" cy="749.600" r="0.900"/><circle cx="194" cy="749.600" r="0.900"/><circle cx="189.500" cy="753.400" r="0.900"/><circle cx="194" cy="753.400" r="0.900"/></g>
<!-- crystal -->
<rect x="182" y="767.600" width="20.300" height="9.400" rx="4.700" fill="#b4b4b4" stroke="#e4e4e4" stroke-width="0.800"/>
<rect x="185" y="769.200" width="14.300" height="3.600" rx="1.800" fill="#8e8e8e"/>
<!-- caps -->
<circle cx="191.400" cy="798" r="6.200" fill="#cfcfcf" stroke="#6a6a6a" stroke-width="0.800"/>
<circle cx="205.800" cy="798" r="6.200" fill="#cfcfcf" stroke="#6a6a6a" stroke-width="0.800"/>
<path d="M187 796h9M201.500 796h9" stroke="#8a8a8a" stroke-width="2"/>
<!-- logo -->
<g fill="none" stroke="#f4f4f4" stroke-width="2"><ellipse cx="222" cy="755.600" rx="4.600" ry="3.600"/><ellipse cx="232.600" cy="755.600" rx="4.600" ry="3.600"/></g>
<rect x="217" y="761" width="20" height="2" fill="#9a9a9a"/>
<ellipse cx="250" cy="756" rx="10" ry="4" fill="#555" stroke="#c4c4c4" stroke-width="0.900"/>
<text x="243" y="758.600" font-size="7" fill="#cfcfcf" font-weight="bold" lengthAdjust="spacingAndGlyphs" textLength="14">UNO</text>
<!-- components column -->
<g fill="#a8a8a8"><rect x="205" y="748" width="3.600" height="3"/><rect x="205" y="755" width="3.600" height="5"/><rect x="205" y="765" width="3.600" height="3"/><rect x="206" y="771" width="6" height="4"/><rect x="159" y="770" width="4" height="5"/><rect x="160" y="786" width="4.500" height="5"/><rect x="174" y="784" width="3" height="9"/></g>
<!-- chip -->
<path d="M214 777.800L283 776L285.500 789L214 789.500Z" fill="#262626"/>
<path d="M215 790.600H284" stroke="#d8d8d8" stroke-width="1.200" stroke-dasharray="2 3.300"/>
<path d="M213 792L286 791.500L288 801L212 801.500Z" fill="#1a1a1a"/>
<rect x="232" y="774.500" width="5" height="1.200" fill="#ccc"/><circle cx="274" cy="781.500" r="1" fill="#ddd"/>
<!-- icsp pins -->
<g stroke="#161616" stroke-width="1.500"><path d="M274 775V762"/><path d="M277.500 775V760"/><path d="M281 776V761"/><path d="M284 777V764"/></g>
<circle cx="264" cy="758" r="1.500" fill="#ddd"/>
<!-- bottom header -->
<path d="M210 803.600L291 803L292.500 816L210 816.500Z" fill="#202020"/>
<path d="M212 806.200H291" stroke="#4e4e4e" stroke-width="2.400" stroke-dasharray="3 2.400"/>
<path d="M212 818H289" stroke="#8a8a8a" stroke-width="0.800" stroke-dasharray="3 2"/>
<path d="M257 804.400L251.500 819" stroke="#eaeaea" stroke-width="1.500"/>
<path d="M281 790L290 803" stroke="#777" stroke-width="1"/>
<!-- bottom left -->
<circle cx="179" cy="805" r="3" fill="#f4f4f4"/><circle cx="181.300" cy="815.300" r="3.600" fill="#fafafa"/><circle cx="169.500" cy="815" r="3" fill="#bdbdbd"/>
<rect x="190.500" y="810.500" width="14.500" height="8.500" rx="1" fill="#2a2a2a" stroke="#c4c4c4" stroke-width="0.800"/>
</g>
<g filter="url(#bl)">
<circle cx="171.500" cy="851.600" r="1.400" fill="none" stroke="#aaa" stroke-width="0.600"/>
<text x="175" y="853.200" font-size="5" fill="#a2a2a2" font-style="italic" lengthAdjust="spacingAndGlyphs" textLength="84.500">Наведите курсор, чтобы увеличить</text>
</g>

<!-- right info panel -->
<g filter="url(#bl)">
<text x="317.500" y="670.200" font-size="7.100" fill="#5a5a5a" lengthAdjust="spacingAndGlyphs" textLength="213">OOH R3 MEGA328P ATMEGA16U2 для Arduino Совместимый + Кабель USB</text>
<text x="317.500" y="680" font-size="6" fill="#555">A</text><circle cx="324" cy="678" r="2.600" fill="none" stroke="#666" stroke-width="0.700" stroke-dasharray="2 1"/>
<text x="330.600" y="679.800" font-size="5.300" fill="#777" font-style="italic" lengthAdjust="spacingAndGlyphs" textLength="86.400">Посмотреть название на английском</text>
<g fill="#7a7a7a"><circle cx="320" cy="687.300" r="2"/><circle cx="325" cy="687.300" r="2"/><circle cx="330" cy="687.300" r="2"/><circle cx="335" cy="687.300" r="2"/><circle cx="340" cy="687.300" r="2"/></g>
<text x="345" y="689.300" font-size="5.800" fill="#4a4a4a" font-weight="bold" lengthAdjust="spacingAndGlyphs" textLength="8.500">4.8</text>
<text x="355" y="689.200" font-size="5" fill="#aaa" font-style="italic" lengthAdjust="spacingAndGlyphs" textLength="42">(446 голосов(а)) ▾</text>
<text x="405" y="689.200" font-size="5" fill="#444" font-weight="bold" lengthAdjust="spacingAndGlyphs" textLength="32.500">756 заказа(ов)</text>
<path d="M318 694.400H548" stroke="#dcdcdc" stroke-width="0.600"/>
<text x="317.500" y="703.600" font-size="5" fill="#8a8a8a" lengthAdjust="spacingAndGlyphs" textLength="13.500">Цена:</text>
<text x="351.900" y="707" font-size="9.600" fill="#5a5a5a" font-weight="bold" lengthAdjust="spacingAndGlyphs" textLength="48">351,38 руб.</text>
<text x="403" y="707" font-size="5" fill="#aaa" lengthAdjust="spacingAndGlyphs" textLength="10.500">/ шт.</text>
<text x="317.500" y="728.200" font-size="5" fill="#666" lengthAdjust="spacingAndGlyphs" textLength="22.500">Доставка:</text>
<text x="352" y="728.600" font-size="6.300" fill="#484848" font-weight="bold" lengthAdjust="spacingAndGlyphs" textLength="181.500">Бесплатная доставка в Russian Federation службой AliExpress</text>
<text x="352" y="735.800" font-size="6.300" fill="#484848" font-weight="bold" lengthAdjust="spacingAndGlyphs" textLength="53">Standard Shipping</text>
<rect x="407" y="731.600" width="3.600" height="3.600" fill="none" stroke="#bbb" stroke-width="0.500"/>
<text x="352" y="743.300" font-size="5" fill="#a6a6a6" font-style="italic" lengthAdjust="spacingAndGlyphs" textLength="63">Расчётное время доставки:</text>
<text x="417" y="743.300" font-size="5.200" fill="#3c3c3c" font-weight="bold" lengthAdjust="spacingAndGlyphs" textLength="22">25-41 дн.</text>
<circle cx="444.600" cy="741.600" r="2.700" fill="#4a4a4a"/>
<text x="317" y="756.200" font-size="5.200" fill="#4c4c4c" font-weight="bold" lengthAdjust="spacingAndGlyphs" textLength="29">Количество:</text>
<rect x="352.300" y="748.800" width="41.400" height="11" fill="#fafafa" stroke="#cacaca" stroke-width="0.700" stroke-dasharray="1.500 0.700"/>
<path d="M355.500 754.600h4" stroke="#aaa" stroke-width="0.800"/>
<text x="371.500" y="757" font-size="6.500" fill="#666">1</text>
<path d="M386 754.400h4.400M388.200 752.200v4.400" stroke="#3a3a3a" stroke-width="1"/>
<text x="397" y="756.200" font-size="5" fill="#b0b0b0" font-style="italic" lengthAdjust="spacingAndGlyphs" textLength="46.700">шт. (77 шт. available)</text>
<text x="317" y="770.600" font-size="5" fill="#666" lengthAdjust="spacingAndGlyphs" textLength="14">Общая</text>
<text x="317" y="776.400" font-size="5" fill="#999" lengthAdjust="spacingAndGlyphs" textLength="26">стоимость:</text>
<text x="352.300" y="772.300" font-size="8" fill="#444" font-weight="bold" lengthAdjust="spacingAndGlyphs" textLength="39">351,36 руб.</text>
<rect x="317" y="786" width="74" height="16" fill="#9c9c9c"/>
<text x="331" y="796.400" font-size="6.500" fill="#cdcdcd" lengthAdjust="spacingAndGlyphs" textLength="44">Купить сейчас</text>
<rect x="395" y="785.800" width="88" height="16.400" fill="#8e8e8e"/>
<text x="406" y="796.400" font-size="6.500" fill="#c6c6c6" lengthAdjust="spacingAndGlyphs" textLength="66">Добавить в корзину</text>
<path d="M320.600 813.600c-4.600-3.200-3.400-6-1.600-6c.8 0 1.300.5 1.600 1.100c.3-.6.800-1.100 1.600-1.100c1.800 0 3 2.800-1.600 6z" fill="none" stroke="#555" stroke-width="0.800"/>
<text x="326" y="812.400" font-size="5.200" fill="#666" font-style="italic" font-weight="bold" lengthAdjust="spacingAndGlyphs" textLength="62">Добавить в "Мои желания"</text>
<text x="390" y="812.400" font-size="5" fill="#b4b4b4" font-style="italic" lengthAdjust="spacingAndGlyphs" textLength="36">(746 добавили)</text>
<circle cx="430" cy="810.800" r="2" fill="none" stroke="#bbb" stroke-width="0.500"/>
<path d="M318 820.500H537" stroke="#e0e0e0" stroke-width="0.600" stroke-dasharray="1.500 0.800"/>
<text x="317" y="831" font-size="5" fill="#bbb" lengthAdjust="spacingAndGlyphs" textLength="18">Возврат</text>
<text x="317" y="837" font-size="5" fill="#bbb" lengthAdjust="spacingAndGlyphs" textLength="16">товара:</text>
<rect x="352" y="827" width="4.600" height="4.200" fill="none" stroke="#777" stroke-width="0.700"/>
<g font-size="5" fill="#7a7a7a"><text x="360" y="831.200" lengthAdjust="spacingAndGlyphs" textLength="174.600">Если товар не соответствует описанию, вы можете вернуть товар, оплатив</text>
<text x="360" y="837.500" lengthAdjust="spacingAndGlyphs" textLength="172">стоимость обратной пересылки, или оставить товар себе и договориться</text>
<text x="360" y="843.400" lengthAdjust="spacingAndGlyphs" textLength="116">о компенсации с продавцом. Узнать подробнее »</text></g>
<text x="317" y="852.600" font-size="5" fill="#c0c0c0" lengthAdjust="spacingAndGlyphs" textLength="22">Гарантии</text>
<text x="317" y="858.800" font-size="5" fill="#c0c0c0" lengthAdjust="spacingAndGlyphs" textLength="23">продавца:</text>
<rect x="352" y="848.400" width="4.600" height="4.200" fill="none" stroke="#888" stroke-width="0.700"/>
<text x="359" y="852.600" font-size="5" fill="#888" lengthAdjust="spacingAndGlyphs" textLength="37">Доставка в срок</text>
<text x="359" y="859.600" font-size="5" fill="#333" font-weight="bold" lengthAdjust="spacingAndGlyphs" textLength="14">60 дн.</text>
<circle cx="402.500" cy="850.600" r="2.200" fill="none" stroke="#888" stroke-width="0.700"/>
<text x="408" y="852.600" font-size="5" fill="#999" lengthAdjust="spacingAndGlyphs" textLength="41">Местный возврат</text>
<text x="409" y="859.600" font-size="5" fill="#2a2a2a" font-weight="bold" lengthAdjust="spacingAndGlyphs" textLength="19">15 дней</text>
<rect x="466.300" y="856" width="78.600" height="6.600" fill="#cfcfcf"/>
<path d="M467 858H544M467 860.500H544" stroke="#aaa" stroke-width="0.800" stroke-dasharray="1 0.700"/>
</g>

</svg>

</body></html>
